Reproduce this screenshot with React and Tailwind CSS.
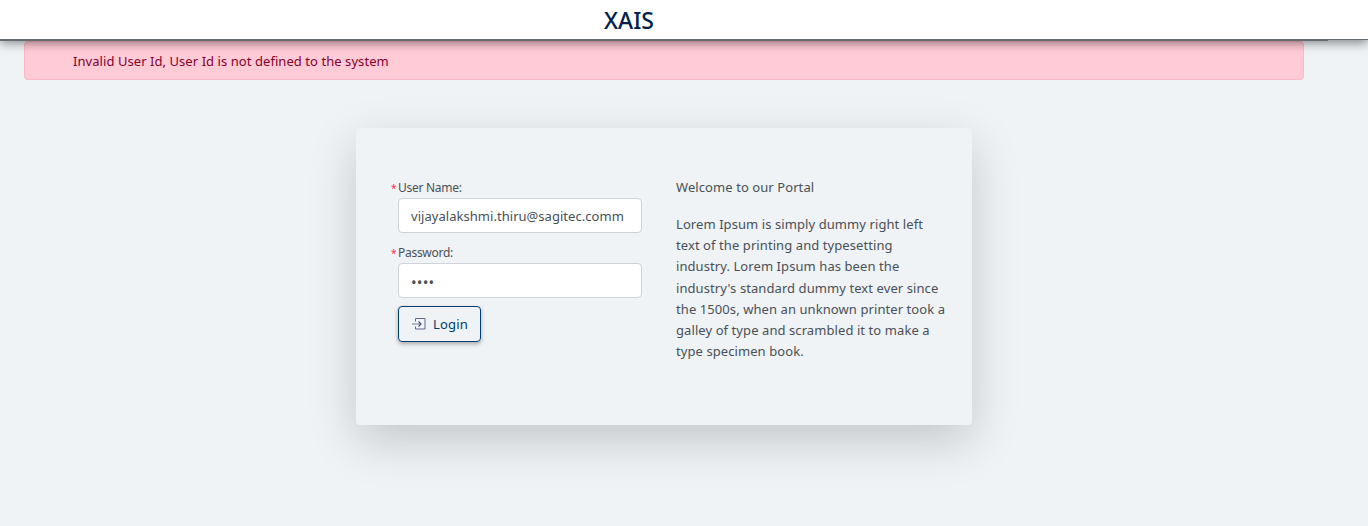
const lines = [
  'Lorem Ipsum is simply dummy right left',
  'text of the printing and typesetting',
  'industry. Lorem Ipsum has been the',
  "industry's standard dummy text ever since",
  'the 1500s, when an unknown printer took a',
  'galley of type and scrambled it to make a',
  'type specimen book.',
];

function LoginIcon() {
  return (
    <svg width="14" height="12" viewBox="0 0 14 12" fill="none" className="shrink-0">
      <path d="M3.5 3.5v-3h9.500v10.5H3.500v-2.500" stroke="#65688a" strokeWidth="1" />
      <path d="M0 6h8.500" stroke="#9a9dae" strokeWidth="1.4" />
      <path d="M6.500 3.500l2.500 2.500-2.500 2.500" stroke="#414b73" strokeWidth="1.1" />
    </svg>
  );
}

function Field({ label, type, value, inputClass }) {
  return (
    <div className="h-[65px]">
      <label className="-ml-[7px] flex h-[18px] items-center whitespace-nowrap text-[12px] leading-[18px] tracking-[-0.28px] text-[#495057]">
        <span className="w-[7px] text-[10px] text-[#ff2850]">*</span>
        {label}
      </label>
      <input
        type={type}
        defaultValue={value}
        className={`mt-px block h-[35px] w-[244px] rounded-[4px] border border-[#ced4da] bg-white px-3 text-[#495057] outline-none ${inputClass}`}
      />
    </div>
  );
}

export default function App() {
  return (
    <div className="flex h-[526px] w-[1368px] flex-col overflow-hidden bg-[#eff3f6] font-['Noto_Sans','Open_Sans',sans-serif] text-[13px] text-[#495057]">
      <header className="relative z-10 h-10 border-b border-[#666b70] bg-white shadow-[0_3px_10px_rgba(0,0,0,0.45)]">
        <div className="flex h-[41px] w-[1328px] justify-center border-b border-[#666b70]">
          <h1 className="ml-[-70px] h-10 text-[23px] font-medium leading-[41px] text-[#00204d]">XAIS</h1>
        </div>
      </header>
      <div className="ml-6 mt-px flex h-[39px] w-[1280px] shrink-0 items-center rounded-[4px] border border-[#ffb8c6] bg-[#ffcbd7] pl-12 pt-[2px] text-[#85002b]">
        <span className="tracking-[0.06px]">Invalid User Id, User Id is not defined to the system</span>
      </div>
      <main className="ml-[356px] mt-12 flex h-[297px] w-[616px] shrink-0 rounded-[4px] bg-[#eff3f6] pl-[42px] pt-[51px] shadow-[0_16px_48px_rgba(0,0,0,0.18)]">
        <form className="w-[278px] shrink-0">
          <Field label="User Name:" type="text" value="vijayalakshmi.thiru@sagitec.comm" inputClass="text-[13px] tracking-[0.04px]" />
          <Field label="Password:" type="password" value="1234" inputClass="pt-[2px] text-[15px] tracking-[0.2px]" />
          <button type="button" className="-mt-[3px] flex h-9 w-[83px] items-center gap-[7px] rounded-[4px] border border-[#003c71] pl-[13px] text-[#003c71] shadow-[0_2px_4px_rgba(0,0,0,0.3)]">
            <LoginIcon />
            <span className="pt-[2px] tracking-[0.2px]">Login</span>
          </button>
        </form>
        <section className="-mt-[2px] whitespace-nowrap leading-[21.15px] tracking-[0.08px]">
          <p className="mb-4">Welcome to our Portal</p>
          {lines.map((line) => (
            <p key={line}>{line}</p>
          ))}
        </section>
      </main>
    </div>
  );
}
